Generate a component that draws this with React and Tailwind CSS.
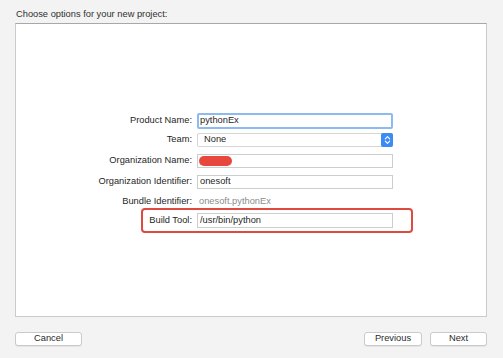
export default function App() {
  const label = "w-[181px] shrink-0 text-right pr-[5px] text-[#262626]";
  const field =
    "w-[196px] h-[14px] bg-white border border-[#cdcdcd] flex items-center pl-[2px] text-[#1f1f1f] leading-none";
  return (
    <div className="w-[503px] h-[358px] bg-[#f3f3f3] flex flex-col pl-[15px] pr-[16px] font-['Liberation_Sans',Arial,sans-serif] text-[9.3px] text-[#2a2a2a]">
      <div className="h-[23px] pl-px pt-[8px] leading-[12px] text-[#303030]">
        Choose options for your new project:
      </div>
      <div className="flex-1 bg-white border border-[#cbcbcb] border-t-[#a8a8a8] flex flex-col">
        <div className="h-[89px]" />
        {/* Product Name */}
        <div className="flex items-center h-[16px]">
          <div className={label}>Product Name:</div>
          <div className="w-[196px] h-[16px] bg-white border-2 border-[#8dbbf0] rounded-[2px] flex items-center pl-[1px] text-[#1f1f1f] leading-none">
            pythonEx
          </div>
        </div>
        {/* Team */}
        <div className="flex items-center h-[14px] mt-[4px]">
          <div className={label}>Team:</div>
          <div className="w-[196px] h-[14px] bg-white border border-[#d6d6d6] rounded-[2px] flex items-center justify-between pl-[6px] text-[#1f1f1f] leading-none">
            <span>None</span>
            <span className="w-[12px] h-[14px] -mr-px rounded-[2px] bg-[#3b8af6] flex items-center justify-center">
              <svg width="7" height="10" viewBox="0 0 7 10" fill="none">
                <path d="M1.3 3.8 L3.5 1.6 L5.7 3.8" stroke="white" strokeWidth="1.1" strokeLinecap="round" strokeLinejoin="round" />
                <path d="M1.3 6.2 L3.5 8.4 L5.7 6.2" stroke="white" strokeWidth="1.1" strokeLinecap="round" strokeLinejoin="round" />
              </svg>
            </span>
          </div>
        </div>
        {/* Organization Name */}
        <div className="flex items-center h-[14px] mt-[7px]">
          <div className={label}>Organization Name:</div>
          <div className={field + " pl-0"}>
            <span className="w-[33px] h-[10px] rounded-full bg-[#e8473d] -ml-px" />
          </div>
        </div>
        {/* Organization Identifier */}
        <div className="flex items-center h-[14px] mt-[7px]">
          <div className={label}>Organization Identifier:</div>
          <div className={field}>onesoft</div>
        </div>
        {/* Bundle Identifier */}
        <div className="flex items-center h-[14px] mt-[6px]">
          <div className={label}>Bundle Identifier:</div>
          <div className="w-[196px] pl-[2px] text-[#8c8c8c] leading-none">onesoft.pythonEx</div>
        </div>
        {/* Build Tool (highlighted) */}
        <div className="ml-[125px] w-[272px] h-[25px] -mt-px border-2 border-[#dc4a40] rounded-[4px] flex items-center pr-[18px]">
          <div className="flex-1 text-right pr-[5px] text-[#262626]">Build Tool:</div>
          <div className={field + " h-[15px]"}>/usr/bin/python</div>
        </div>
        <div className="flex-1" />
      </div>
      <div className="h-[41px] flex items-start pt-[15px]">
        <button className="w-[67px] h-[14px] bg-white border border-[#cacaca] rounded-[3px] shadow-[0_1px_0_rgba(0,0,0,0.06)] text-[#2a2a2a] leading-none flex items-center justify-center">
          Cancel
        </button>
        <div className="flex-1" />
        <button className="w-[58px] h-[14px] bg-white border border-[#cacaca] rounded-[3px] shadow-[0_1px_0_rgba(0,0,0,0.06)] text-[#2a2a2a] leading-none flex items-center justify-center">
          Previous
        </button>
        <button className="ml-[8px] w-[57px] h-[14px] bg-white border border-[#cacaca] rounded-[3px] shadow-[0_1px_0_rgba(0,0,0,0.06)] text-[#2a2a2a] leading-none flex items-center justify-center">
          Next
        </button>
      </div>
    </div>
  );
}
